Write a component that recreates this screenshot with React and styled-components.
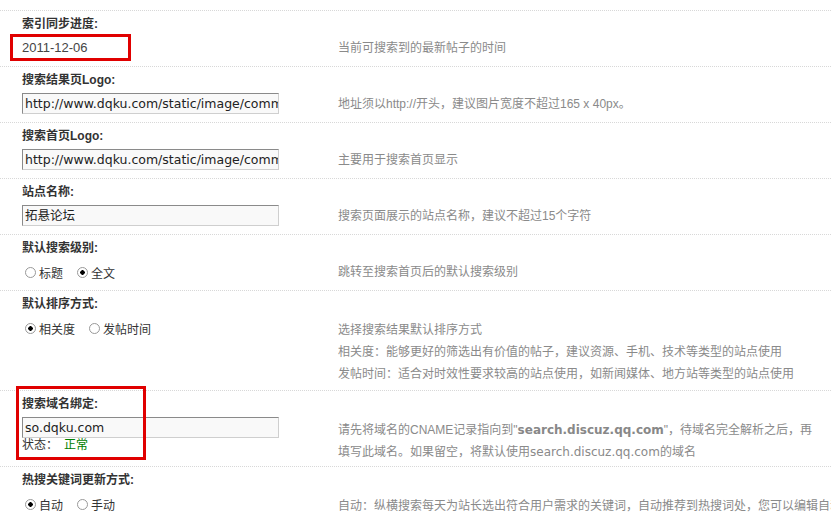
import React from 'react';
import styled, { createGlobalStyle } from 'styled-components';

const Global = createGlobalStyle`
  body { margin: 0; background: #fff; font-family: "Liberation Sans", "Noto Sans CJK SC", sans-serif; font-size: 12px; color: #333; }
`;

const Page = styled.div`
  padding-top: 10px;
  width: 831px;
  overflow: hidden;
`;

const Section = styled.div`
  display: flex;
  border-top: 1px dotted #d8d8d8;
  height: ${(p) => p.h || 55}px;
  overflow: hidden;
`;

const Left = styled.div`
  width: 316px;
  flex-shrink: 0;
  padding-left: 22px;
  box-sizing: border-box;
  display: flex;
  flex-direction: column;
`;

const MarkedLeft = styled(Left)`
  position: relative;
  overflow: visible;
`;

const Marked = styled.div`
  position: absolute;
  left: 16px;
  top: -5px;
  width: 124px;
  height: 68px;
  border: 3px solid #e00000;
  pointer-events: none;
`;

const Title = styled.div`
  height: 26px;
  line-height: 26px;
  font-weight: bold;
  font-size: 12px;
  color: #333;
  white-space: nowrap;
`;

const Value = styled.div`
  display: flex;
  flex-direction: column;
`;

const DateBox = styled.div`
  margin-left: -12px;
  margin-top: -3px;
  width: 106px;
  height: 21px;
  border: 3px solid #e00000;
  font-size: 13px;
  line-height: 21px;
  padding-left: 9px;
  color: #444;
`;

const Input = styled.div`
  width: 253px;
  height: 19px;
  border: 1px solid;
  border-color: #8a8a8a #cfcfcf #cfcfcf #8a8a8a;
  background: #f9f9f9;
  font-family: "DejaVu Sans", "Noto Sans CJK SC", sans-serif;
  font-size: 12.5px;
  line-height: 19px;
  padding-left: 2px;
  white-space: nowrap;
  overflow: hidden;
  color: #222;
`;

const Status = styled.div`
  font-size: 12px;
  line-height: 15px;
  color: #333;
  span { color: #008000; margin-left: 6px; }
`;

const Radios = styled.div`
  display: flex;
  gap: 14px;
  height: 22px;
  align-items: center;
  padding-left: 3px;
`;

const Radio = styled.label`
  display: flex;
  align-items: center;
  gap: 3px;
  font-size: 12px;
  color: #333;
  &::before {
    content: '';
    width: 9px;
    height: 9px;
    border-radius: 50%;
    border: 1px solid #999;
    background: ${(p) => (p.on ? 'radial-gradient(circle, #000 0 2px, #fff 2.5px)' : '#fff')};
  }
`;

const Tips = styled.div`
  padding-top: ${(p) => p.top || 26}px;
  padding-left: 22px;
  font-size: 12px;
  line-height: 22px;
  color: #8a8a8a;
  white-space: nowrap;
  b { color: #888; font-family: "DejaVu Sans", sans-serif; font-size: 12px; }
  em { font-style: normal; font-family: "DejaVu Sans", sans-serif; font-size: 12px; }
`;

const url = 'http://www.dqku.com/static/image/common/logo.png';

export default function App() {
  return (
    <Page>
      <Global />
      <Section>
        <Left>
          <Title>索引同步进度:</Title>
          <Value><DateBox>2011-12-06</DateBox></Value>
        </Left>
        <Tips>当前可搜索到的最新帖子的时间</Tips>
      </Section>
      <Section>
        <Left>
          <Title>搜索结果页Logo:</Title>
          <Value><Input>{url}</Input></Value>
        </Left>
        <Tips>地址须以http://开头，建议图片宽度不超过165 x 40px。</Tips>
      </Section>
      <Section>
        <Left>
          <Title>搜索首页Logo:</Title>
          <Value><Input>{url}</Input></Value>
        </Left>
        <Tips>主要用于搜索首页显示</Tips>
      </Section>
      <Section>
        <Left>
          <Title>站点名称:</Title>
          <Value><Input>拓悬论坛</Input></Value>
        </Left>
        <Tips>搜索页面展示的站点名称，建议不超过15个字符</Tips>
      </Section>
      <Section>
        <Left>
          <Title>默认搜索级别:</Title>
          <Radios><Radio>标题</Radio><Radio on>全文</Radio></Radios>
        </Left>
        <Tips>跳转至搜索首页后的默认搜索级别</Tips>
      </Section>
      <Section h={99}>
        <Left>
          <Title>默认排序方式:</Title>
          <Radios><Radio on>相关度</Radio><Radio>发帖时间</Radio></Radios>
        </Left>
        <Tips top={28}>
          选择搜索结果默认排序方式<br />
          相关度：能够更好的筛选出有价值的帖子，建议资源、手机、技术等类型的站点使用<br />
          发帖时间：适合对时效性要求较高的站点使用，如新闻媒体、地方站等类型的站点使用
        </Tips>
      </Section>
      <Section h={75} style={{ overflow: 'visible' }}>
        <MarkedLeft>
          <Marked />
          <Title>搜索域名绑定:</Title>
          <Value><Input>so.dqku.com</Input><Status>状态：<span>正常</span></Status></Value>
        </MarkedLeft>
        <Tips top={28}>
          请先将域名的CNAME记录指向到"<b>search.discuz.qq.com</b>"，待域名完全解析之后，再<br />
          填写此域名。如果留空，将默认使用<em>search.discuz.qq.com</em>的域名
        </Tips>
      </Section>
      <Section h={60}>
        <Left>
          <Title>热搜关键词更新方式:</Title>
          <Radios><Radio on>自动</Radio><Radio>手动</Radio></Radios>
        </Left>
        <Tips top={28}>自动：纵横搜索每天为站长选出符合用户需求的关键词，自动推荐到热搜词处，您可以编辑自动</Tips>
      </Section>
    </Page>
  );
}
